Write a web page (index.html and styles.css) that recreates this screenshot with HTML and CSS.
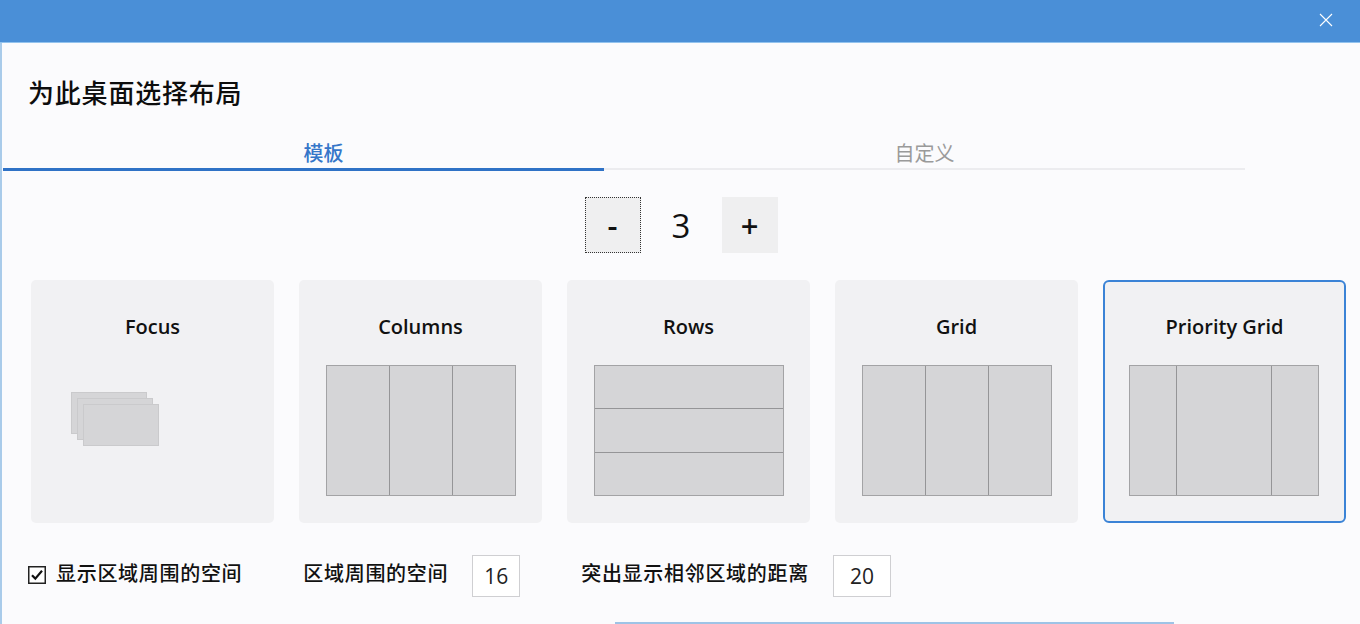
FILE: index.html
```html
<!DOCTYPE html>
<html lang="zh-CN">
<head>
<meta charset="utf-8">
<title>为此桌面选择布局</title>
<link rel="stylesheet" href="styles.css">
</head>
<body>
<div class="window">
  <header class="titlebar">
    <svg class="close" width="14" height="14" viewBox="0 0 14 14" aria-label="关闭">
      <path d="M1 1 L13 13 M13 1 L1 13" stroke="#ffffff" stroke-width="1.1" fill="none"/>
    </svg>
  </header>
  <main class="content">
    <h1 class="heading">为此桌面选择布局</h1>
    <nav class="tabs">
      <div class="tab active">模板</div>
      <div class="tab">自定义</div>
    </nav>
    <div class="stepper">
      <button class="step focused">-</button>
      <span class="count">3</span>
      <button class="step">+</button>
    </div>
    <div class="cards">
      <div class="card">
        <div class="card-title">Focus</div>
        <div class="diagram focus">
          <span class="sheet s1"></span>
          <span class="sheet s2"></span>
          <span class="sheet s3"></span>
        </div>
      </div>
      <div class="card">
        <div class="card-title">Columns</div>
        <div class="diagram cols"><span></span><span></span><span></span></div>
      </div>
      <div class="card">
        <div class="card-title">Rows</div>
        <div class="diagram rows"><span></span><span></span><span></span></div>
      </div>
      <div class="card">
        <div class="card-title">Grid</div>
        <div class="diagram cols"><span></span><span></span><span></span></div>
      </div>
      <div class="card selected">
        <div class="card-title">Priority Grid</div>
        <div class="diagram priority"><span></span><span></span><span></span></div>
      </div>
    </div>
    <div class="options">
      <label class="check">
        <svg class="box" width="18" height="18" viewBox="0 0 18 18">
          <rect x="0.75" y="0.75" width="16.5" height="16.5" fill="#ffffff" stroke="#222" stroke-width="1.5"/>
          <path d="M4 9.2 L7.3 12.6 L14 4.8" stroke="#111" stroke-width="2.2" fill="none"/>
        </svg>
        <span class="label">显示区域周围的空间</span>
      </label>
      <span class="label spaced">区域周围的空间</span>
      <span class="field narrow">16</span>
      <span class="label spaced">突出显示相邻区域的距离</span>
      <span class="field wide">20</span>
    </div>
    <div class="footer">
      <div class="primary"></div>
    </div>
  </main>
</div>
</body>
</html>
```
FILE: styles.css
```css
html, body {
  margin: 0;
  padding: 0;
  width: 1360px;
  height: 624px;
  overflow: hidden;
  background: #fbfbfd;
}

.window {
  width: 1360px;
  height: 624px;
  overflow: hidden;
  font-family: "Noto Sans CJK SC", "Noto Sans", sans-serif;
  color: #111;
}

.titlebar {
  height: 42px;
  background: #4a8fd7;
  border-bottom: 1px solid #93c3ee;
  display: flex;
  align-items: center;
  justify-content: flex-end;
  padding-right: 27px;
}

.close {
  display: block;
  margin-top: -3px;
}

.content {
  border-left: 2px solid #a9cbea;
  height: 581px;
}

.heading {
  margin: 0;
  padding: 33px 0 0 26px;
  font-size: 26px;
  line-height: 32px;
  letter-spacing: 0.8px;
  font-weight: 500;
  color: #0d0d0d;
}

.tabs {
  display: flex;
  margin: 33px 0 0 1px;
}

.tab {
  box-sizing: border-box;
  text-align: center;
  font-size: 20px;
  line-height: 24px;
  color: #9a9a9a;
}

.tab.active {
  width: 601px;
  padding-left: 40px;
  padding-bottom: 3px;
  border-bottom: 3px solid #2f72c6;
  color: #3576c9;
  font-weight: 500;
}

.tab:not(.active) {
  width: 641px;
  padding-bottom: 3px;
  border-bottom: 2px solid #ececef;
  height: 29px;
}

.stepper {
  display: flex;
  justify-content: center;
  align-items: center;
  margin-top: 26px;
  height: 56px;
}

.step {
  width: 56px;
  height: 56px;
  border: none;
  background: #efeff0;
  font-family: "Open Sans", sans-serif;
  font-size: 31px;
  font-weight: 600;
  color: #111;
  padding: 0;
  line-height: 56px;
}

.step.focused {
  outline: 1px dotted #333;
  outline-offset: -1px;
}

.count {
  width: 81px;
  text-align: center;
  font-family: "Open Sans", sans-serif;
  font-size: 33px;
  font-weight: 400;
  color: #111;
}

.cards {
  display: flex;
  gap: 25px;
  margin-top: 27px;
  padding-left: 29px;
}

.card {
  box-sizing: border-box;
  width: 243px;
  height: 243px;
  background: #f1f1f3;
  border-radius: 5px;
  display: flex;
  flex-direction: column;
  align-items: center;
  padding-top: 33px;
}

.card.selected {
  border: 2px solid #3b83d6;
  border-radius: 6px;
  padding-top: 31px;
}

.card-title {
  font-family: "Open Sans", sans-serif;
  font-size: 20px;
  line-height: 28px;
  font-weight: 600;
  color: #111;
}

.diagram {
  box-sizing: border-box;
  width: 190px;
  height: 131px;
  margin-top: 24px;
  display: grid;
  gap: 1px;
  background: #959597;
  border: 1px solid #a3a3a5;
}

.diagram span {
  background: #d5d5d7;
}

.diagram.cols {
  grid-template-columns: 1fr 1fr 1fr;
}

.diagram.rows {
  grid-template-rows: 1fr 1fr 1fr;
}

.diagram.priority {
  grid-template-columns: 46fr 95fr 46fr;
  margin-left: -1px;
}

.diagram.focus {
  position: relative;
  background: transparent;
  border: none;
  display: block;
}

.sheet {
  position: absolute;
  box-sizing: border-box;
  width: 76px;
  height: 42px;
  border: 1px solid #cacacc;
}

.s1 { left: 13px; top: 27px; }
.s2 { left: 19px; top: 33px; }
.s3 { left: 25px; top: 39px; }

.options {
  display: flex;
  align-items: center;
  height: 42px;
  margin-top: 32px;
  padding-left: 26px;
}

.check {
  display: flex;
  align-items: center;
  gap: 10px;
}

.box {
  display: block;
  margin-bottom: 3px;
}

.label {
  font-size: 20px;
  line-height: 28px;
  padding-bottom: 6px;
  letter-spacing: 0.7px;
  font-weight: 500;
  color: #111;
  white-space: nowrap;
}

.spaced {
  margin-left: 61px;
  margin-right: 24px;
}

.field {
  box-sizing: border-box;
  height: 42px;
  border: 1px solid #cfcfd2;
  background: #ffffff;
  display: flex;
  align-items: center;
  justify-content: center;
  font-family: "Open Sans", sans-serif;
  font-size: 21px;
  color: #222;
}

.field.narrow { width: 48px; }
.field.wide { width: 58px; }

.footer {
  margin-top: 25px;
  padding-left: 613px;
}

.primary {
  width: 559px;
  height: 0;
  border-top: 2px solid #9ec3e6;
}
```
